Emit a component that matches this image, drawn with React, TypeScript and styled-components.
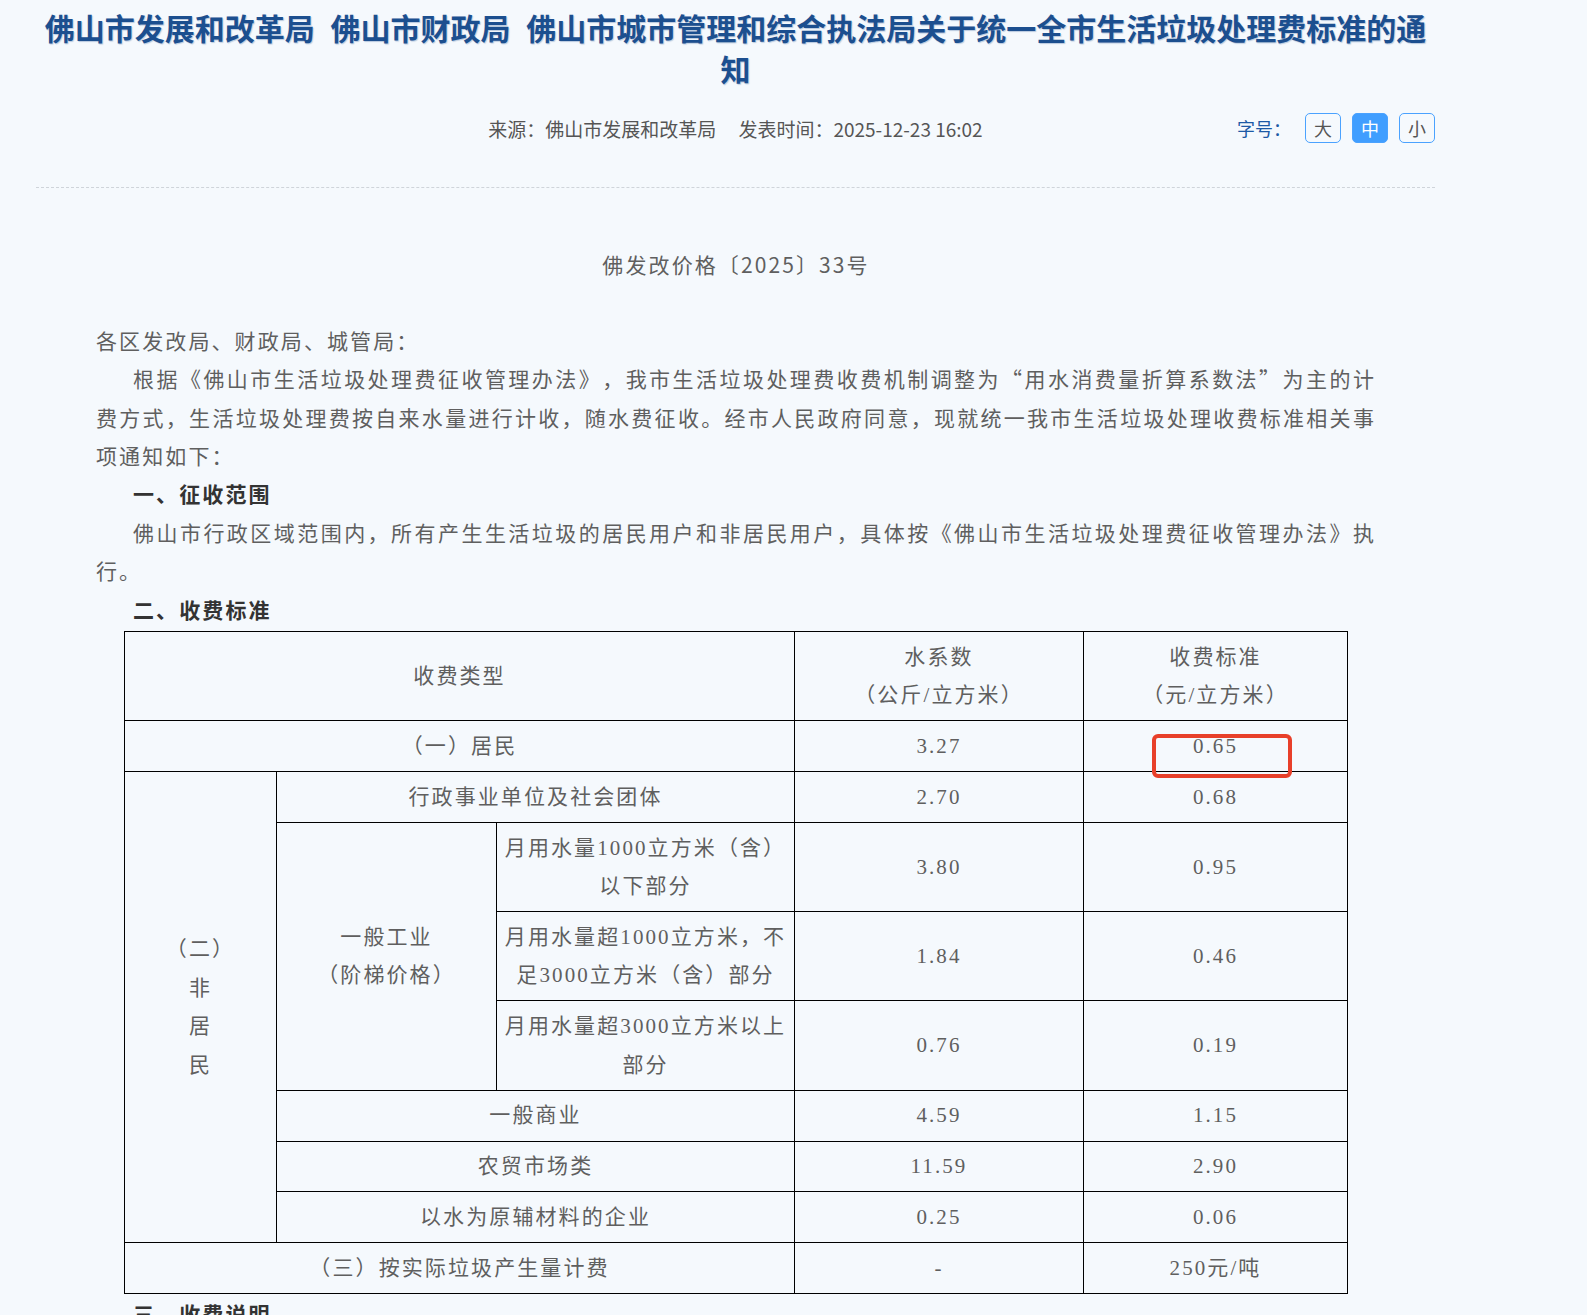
import React from 'react';
import styled, { createGlobalStyle } from 'styled-components';

const GlobalStyle = createGlobalStyle`
  html, body {
    margin: 0;
    padding: 0;
    background: #f5f9fd;
  }
  body {
    font-family: "Noto Sans CJK SC", "Noto Sans", sans-serif;
    text-spacing-trim: space-all;
  }
`;

const Page = styled.div`
  width: 1399px;
  margin-left: 36px;
`;

const Header = styled.header`
  padding-top: 7px;
  padding-bottom: 44px;
  border-bottom: 1px dashed #cfd4da;
`;

const Title = styled.h1`
  margin: 0;
  font-family: "Noto Sans CJK SC", sans-serif;
  font-size: 30px;
  line-height: 41px;
  font-weight: 700;
  color: #1c4f8f;
  text-align: center;
  word-spacing: 9px;
  text-shadow: 1px 1px 1px rgba(28, 79, 143, 0.28);
`;

const MetaRow = styled.div`
  margin-top: 24px;
  height: 30px;
  display: grid;
  grid-template-columns: 1fr auto 1fr;
  align-items: center;
`;

const Meta = styled.div`
  grid-column: 2;
  display: flex;
  gap: 22px;
  font-size: 19px;
  color: #555;
  white-space: nowrap;
`;

const SizeGroup = styled.div`
  grid-column: 3;
  justify-self: end;
  display: flex;
  align-items: center;
`;

const SizeLabel = styled.span`
  font-size: 18px;
  color: #1d5aa6;
  margin-right: 14px;
`;

const SizeButtons = styled.div`
  display: flex;
  gap: 11px;
`;

const SizeButton = styled.button<{ $active?: boolean }>`
  width: 36px;
  height: 30px;
  padding: 0;
  box-sizing: border-box;
  border: 1px solid #4aa2ff;
  border-radius: 5px;
  background: ${(p) => (p.$active ? '#409eff' : 'transparent')};
  color: ${(p) => (p.$active ? '#ffffff' : '#555')};
  font-family: "Noto Sans CJK SC", sans-serif;
  font-size: 18px;
  line-height: 28px;
  cursor: pointer;
`;

const Content = styled.main`
  padding: 57px 59px 0 60px;
`;

const DocNo = styled.p`
  margin: 0 0 37.4px;
  font-size: 21px;
  line-height: 38.4px;
  letter-spacing: 2.1px;
  color: #5f5f5f;
  text-align: center;
`;

const Para = styled.p<{ $indent?: boolean; $bold?: boolean }>`
  margin: 0;
  font-size: 21px;
  line-height: 38.4px;
  letter-spacing: 2.1px;
  text-align: justify;
  text-spacing-trim: space-all;
  text-indent: ${(p) => (p.$indent ? '37px' : '0')};
  color: ${(p) => (p.$bold ? '#333' : '#5f5f5f')};
  font-weight: ${(p) => (p.$bold ? 700 : 400)};
`;

const Table = styled.table`
  margin: 3px auto 0;
  width: 1223px;
  table-layout: fixed;
  border-collapse: collapse;
`;

const Cell = styled.td`
  border: 1px solid #000;
  padding: 5.65px 5px;
  text-align: center;
  vertical-align: middle;
  font-family: "Liberation Serif", "Noto Sans CJK SC", serif;
  font-size: 21px;
  line-height: 38.5px;
  letter-spacing: 2.1px;
  color: #5f5f5f;
  text-spacing-trim: space-all;
`;

const MarkedCell = styled(Cell)`
  position: relative;
`;

const Highlight = styled.span`
  position: absolute;
  left: 68px;
  top: 13px;
  width: 140px;
  height: 44px;
  box-sizing: border-box;
  border: 4px solid #e8402a;
  border-radius: 6px;
  pointer-events: none;
`;

type Row = { label: string; coef: string; price: string };

const simpleRows: Row[] = [
  { label: '一般商业', coef: '4.59', price: '1.15' },
  { label: '农贸市场类', coef: '11.59', price: '2.90' },
  { label: '以水为原辅材料的企业', coef: '0.25', price: '0.06' },
];

export default function App() {
  return (
    <>
      <GlobalStyle />
      <Page>
        <Header>
          <Title>
            佛山市发展和改革局 佛山市财政局 佛山市城市管理和综合执法局关于统一全市生活垃圾处理费标准的通知
          </Title>
          <MetaRow>
            <Meta>
              <span>来源：佛山市发展和改革局</span>
              <span>发表时间：2025-12-23 16:02</span>
            </Meta>
            <SizeGroup>
              <SizeLabel>字号：</SizeLabel>
              <SizeButtons>
                <SizeButton>大</SizeButton>
                <SizeButton $active>中</SizeButton>
                <SizeButton>小</SizeButton>
              </SizeButtons>
            </SizeGroup>
          </MetaRow>
        </Header>
        <Content>
          <DocNo>佛发改价格〔2025〕33号</DocNo>
          <Para>各区发改局、财政局、城管局：</Para>
          <Para $indent>
            根据《佛山市生活垃圾处理费征收管理办法》，我市生活垃圾处理费收费机制调整为“用水消费量折算系数法”为主的计费方式，生活垃圾处理费按自来水量进行计收，随水费征收。经市人民政府同意，现就统一我市生活垃圾处理收费标准相关事项通知如下：
          </Para>
          <Para $indent $bold>一、征收范围</Para>
          <Para $indent>
            佛山市行政区域范围内，所有产生生活垃圾的居民用户和非居民用户，具体按《佛山市生活垃圾处理费征收管理办法》执行。
          </Para>
          <Para $indent $bold>二、收费标准</Para>
          <Table>
            <colgroup>
              <col style={{ width: 152 }} />
              <col style={{ width: 220 }} />
              <col style={{ width: 298 }} />
              <col style={{ width: 289 }} />
              <col style={{ width: 264 }} />
            </colgroup>
            <tbody>
              <tr>
                <Cell colSpan={3}>收费类型</Cell>
                <Cell>
                  水系数
                  <br />
                  （公斤/立方米）
                </Cell>
                <Cell>
                  收费标准
                  <br />
                  （元/立方米）
                </Cell>
              </tr>
              <tr>
                <Cell colSpan={3}>（一）居民</Cell>
                <Cell>3.27</Cell>
                <MarkedCell>
                  0.65
                  <Highlight />
                </MarkedCell>
              </tr>
              <tr>
                <Cell rowSpan={7}>
                  （二）
                  <br />
                  非
                  <br />
                  居
                  <br />
                  民
                </Cell>
                <Cell colSpan={2}>行政事业单位及社会团体</Cell>
                <Cell>2.70</Cell>
                <Cell>0.68</Cell>
              </tr>
              <tr>
                <Cell rowSpan={3}>
                  一般工业
                  <br />
                  （阶梯价格）
                </Cell>
                <Cell>月用水量1000立方米（含）以下部分</Cell>
                <Cell>3.80</Cell>
                <Cell>0.95</Cell>
              </tr>
              <tr>
                <Cell>月用水量超1000立方米，不足3000立方米（含）部分</Cell>
                <Cell>1.84</Cell>
                <Cell>0.46</Cell>
              </tr>
              <tr>
                <Cell>月用水量超3000立方米以上部分</Cell>
                <Cell>0.76</Cell>
                <Cell>0.19</Cell>
              </tr>
              {simpleRows.map((r) => (
                <tr key={r.label}>
                  <Cell colSpan={2}>{r.label}</Cell>
                  <Cell>{r.coef}</Cell>
                  <Cell>{r.price}</Cell>
                </tr>
              ))}
              <tr>
                <Cell colSpan={3}>（三）按实际垃圾产生量计费</Cell>
                <Cell>-</Cell>
                <Cell>250元/吨</Cell>
              </tr>
            </tbody>
          </Table>
          <Para $indent $bold>三、收费说明</Para>
        </Content>
      </Page>
    </>
  );
}
